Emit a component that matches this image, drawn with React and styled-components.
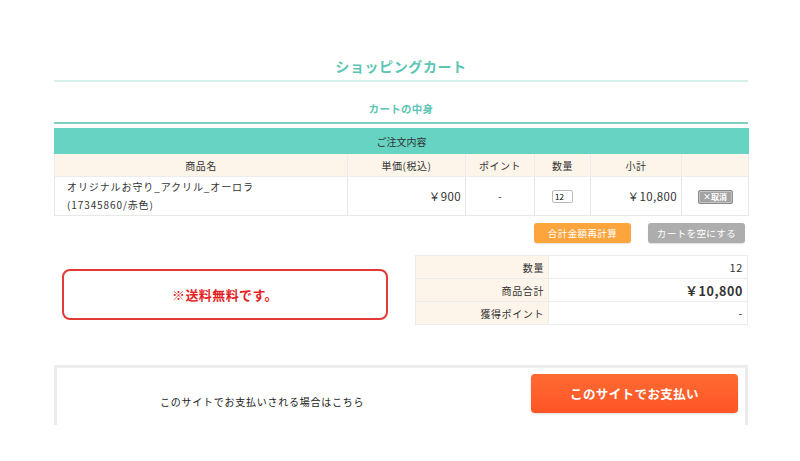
import React from 'react';
import styled, { createGlobalStyle } from 'styled-components';

const GlobalStyle = createGlobalStyle`
  body {
    margin: 0;
    background: #fff;
    color: #333;
    font-family: "Noto Sans CJK JP", "Noto Sans", sans-serif;
  }
`;

const Page = styled.div`
  width: 694px;
  margin-left: 54px;
`;

const Title = styled.h1`
  margin: 56px 0 0;
  padding-bottom: 4px;
  border-bottom: 2px solid #d6efea;
  font-size: 14px;
  line-height: 20px;
  font-weight: bold;
  letter-spacing: 0.6px;
  color: #5cc5b3;
  text-align: center;
`;

const SubTitle = styled.h2`
  margin: 19px 0 0;
  padding-bottom: 5px;
  border-bottom: 2px solid #7fcfc1;
  font-size: 10.5px;
  line-height: 16px;
  font-weight: bold;
  letter-spacing: 0.3px;
  color: #5cc5b3;
  text-align: center;
`;

const CartTable = styled.table`
  width: 100%;
  margin-top: 4px;
  border-collapse: collapse;
  table-layout: fixed;
  font-size: 10px;
`;

const Caption = styled.th`
  height: 24px;
  padding: 0;
  background: #66d3c3;
  border: 1px solid #66d3c3;
  font-weight: normal;
  color: #333;
`;

const HeadCell = styled.th`
  height: 22px;
  padding: 0;
  background: #fdf5ea;
  border: 1px solid #ececec;
  border-top: none;
  font-weight: normal;
  letter-spacing: 0.5px;
`;

const Cell = styled.td`
  height: 38px;
  padding: 0 ${(p) => (p.$align === 'right' ? '4px' : '0')} 0 ${(p) => (p.$align === 'left' ? '12px' : '0')};
  border: 1px solid #e8e8e8;
  text-align: ${(p) => p.$align || 'center'};
  font-size: ${(p) => (p.$price ? '11.5px' : '10px')};
  line-height: 18px;
  letter-spacing: ${(p) => (p.$align === 'left' ? '0.9px' : '0.4px')};
`;

const QtyInput = styled.input`
  box-sizing: border-box;
  width: 21px;
  height: 13px;
  padding: 0 2px;
  border: 1px solid #bbb;
  border-radius: 2px;
  font-size: 8px;
  font-family: inherit;
`;

const CancelButton = styled.button`
  box-sizing: border-box;
  width: 35px;
  height: 14px;
  padding: 0;
  border: 1px solid #8a8a8a;
  border-radius: 2px;
  background: #a3a3a3;
  box-shadow: inset 0 0 0 1px #c4c4c4;
  color: #fff;
  font-family: inherit;
  font-size: 8px;
  font-weight: bold;
  line-height: 12px;
`;

const ActionRow = styled.div`
  display: flex;
  justify-content: flex-end;
  gap: 17px;
  margin-top: 7px;
  padding-right: 3px;
`;

const ActionButton = styled.button`
  width: 97px;
  height: 20px;
  padding: 0;
  border: none;
  border-radius: 3px;
  background: ${(p) => (p.$variant === 'gray' ? '#adadad' : '#fba53c')};
  box-shadow: 0 1px 1px rgba(0, 0, 0, 0.12);
  color: #fff;
  font-family: inherit;
  font-size: 9.5px;
  letter-spacing: 0.4px;
`;

const SummaryRow = styled.div`
  display: flex;
  justify-content: space-between;
  align-items: flex-start;
  margin-top: 12px;
`;

const Notice = styled.div`
  box-sizing: border-box;
  width: 326px;
  height: 51px;
  margin: 14px 0 0 8px;
  border: 2px solid #e43a36;
  border-radius: 8px;
  display: flex;
  align-items: center;
  justify-content: center;
  color: #e41f26;
  font-size: 13px;
  font-weight: bold;
  letter-spacing: 0.4px;
`;

const SummaryTable = styled.table`
  width: 333px;
  border-collapse: collapse;
  table-layout: fixed;
`;

const SumLabel = styled.th`
  width: 128px;
  height: 22px;
  padding: 0 4px 0 0;
  background: #fdf5ea;
  border: 1px solid #ececec;
  text-align: right;
  font-weight: normal;
  font-size: 10px;
  letter-spacing: 0.6px;
`;

const SumValue = styled.td`
  height: 22px;
  padding: 0 4px 0 0;
  border: 1px solid #ececec;
  text-align: right;
  font-size: ${(p) => (p.$strong ? '12.5px' : '11px')};
  font-weight: ${(p) => (p.$strong ? 'bold' : 'normal')};
  letter-spacing: 0.6px;
`;

const PayBox = styled.div`
  box-sizing: border-box;
  height: 60px;
  margin-top: 40px;
  border: 3px solid #ececec;
  border-bottom: none;
  display: flex;
  align-items: flex-start;
`;

const PayText = styled.p`
  margin: 26px 0 0 103px;
  font-size: 10px;
  line-height: 16px;
  letter-spacing: 0.75px;
  color: #222;
`;

const PayButton = styled.button`
  width: 207px;
  height: 39px;
  margin: 6px 7px 0 auto;
  border: none;
  border-radius: 4px;
  background: linear-gradient(#ff6a32, #ff5526);
  box-shadow: 0 1px 2px rgba(0, 0, 0, 0.15);
  color: #fff;
  font-family: inherit;
  font-size: 12.5px;
  font-weight: bold;
  letter-spacing: 0.4px;
`;

const columns = [
  { label: '商品名', width: 293 },
  { label: '単価(税込)', width: 118 },
  { label: 'ポイント', width: 69 },
  { label: '数量', width: 56 },
  { label: '小計', width: 91 },
  { label: '', width: 67 },
];

const summary = [
  { label: '数量', value: '12' },
  { label: '商品合計', value: '￥10,800', strong: true },
  { label: '獲得ポイント', value: '-' },
];

export default function App() {
  return (
    <>
      <GlobalStyle />
      <Page>
        <Title>ショッピングカート</Title>
        <SubTitle>カートの中身</SubTitle>

        <CartTable>
          <colgroup>
            {columns.map((c, i) => (
              <col key={i} style={{ width: c.width }} />
            ))}
          </colgroup>
          <thead>
            <tr>
              <Caption colSpan={6}>ご注文内容</Caption>
            </tr>
            <tr>
              {columns.map((c, i) => (
                <HeadCell key={i}>{c.label}</HeadCell>
              ))}
            </tr>
          </thead>
          <tbody>
            <tr>
              <Cell $align="left">
                オリジナルお守り_アクリル_オーロラ
                <br />
                (17345860/赤色)
              </Cell>
              <Cell $align="right" $price>￥900</Cell>
              <Cell>-</Cell>
              <Cell>
                <QtyInput defaultValue="12" />
              </Cell>
              <Cell $align="right" $price>￥10,800</Cell>
              <Cell>
                <CancelButton>×取消</CancelButton>
              </Cell>
            </tr>
          </tbody>
        </CartTable>

        <ActionRow>
          <ActionButton>合計金額再計算</ActionButton>
          <ActionButton $variant="gray">カートを空にする</ActionButton>
        </ActionRow>

        <SummaryRow>
          <Notice>※送料無料です。</Notice>
          <SummaryTable>
            <tbody>
              {summary.map((s) => (
                <tr key={s.label}>
                  <SumLabel>{s.label}</SumLabel>
                  <SumValue $strong={s.strong}>{s.value}</SumValue>
                </tr>
              ))}
            </tbody>
          </SummaryTable>
        </SummaryRow>

        <PayBox>
          <PayText>このサイトでお支払いされる場合はこちら</PayText>
          <PayButton>このサイトでお支払い</PayButton>
        </PayBox>
      </Page>
    </>
  );
}
